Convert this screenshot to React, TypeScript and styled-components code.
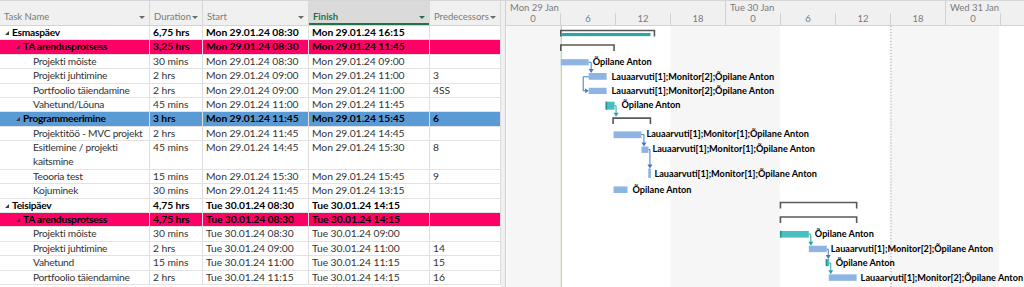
import React from "react";
import styled, { createGlobalStyle } from "styled-components";

const ROW = 14.4;
const HEAD = 25;

const GlobalStyle = createGlobalStyle`
  html, body {
    margin: 0;
    padding: 0;
    background: #ffffff;
  }
  body {
    font-family: Lato, "Liberation Sans", sans-serif;
    overflow: hidden;
  }
`;

type Task = {
  name: string;
  dur: string;
  start: string;
  finish: string;
  pred?: string;
  level: 0 | 1 | 2;
  tone?: "pink" | "blue";
  lines?: number;
};

const tasks: Task[] = [
  { name: "Esmaspäev", dur: "6,75 hrs", start: "Mon 29.01.24 08:30", finish: "Mon 29.01.24 16:15", level: 0 },
  { name: "TA arendusprotsess", dur: "3,25 hrs", start: "Mon 29.01.24 08:30", finish: "Mon 29.01.24 11:45", level: 1, tone: "pink" },
  { name: "Projekti mõiste", dur: "30 mins", start: "Mon 29.01.24 08:30", finish: "Mon 29.01.24 09:00", level: 2 },
  { name: "Projekti juhtimine", dur: "2 hrs", start: "Mon 29.01.24 09:00", finish: "Mon 29.01.24 11:00", pred: "3", level: 2 },
  { name: "Portfoolio täiendamine", dur: "2 hrs", start: "Mon 29.01.24 09:00", finish: "Mon 29.01.24 11:00", pred: "4SS", level: 2 },
  { name: "Vahetund/Lõuna", dur: "45 mins", start: "Mon 29.01.24 11:00", finish: "Mon 29.01.24 11:45", level: 2 },
  { name: "Programmeerimine", dur: "3 hrs", start: "Mon 29.01.24 11:45", finish: "Mon 29.01.24 15:45", pred: "6", level: 1, tone: "blue" },
  { name: "Projektitöö - MVC projekt", dur: "2 hrs", start: "Mon 29.01.24 11:45", finish: "Mon 29.01.24 14:45", level: 2 },
  { name: "Esitlemine / projekti kaitsmine", dur: "45 mins", start: "Mon 29.01.24 14:45", finish: "Mon 29.01.24 15:30", pred: "8", level: 2, lines: 2 },
  { name: "Teooria test", dur: "15 mins", start: "Mon 29.01.24 15:30", finish: "Mon 29.01.24 15:45", pred: "9", level: 2 },
  { name: "Kojuminek", dur: "30 mins", start: "Mon 29.01.24 11:45", finish: "Mon 29.01.24 13:15", level: 2 },
  { name: "Teisipäev", dur: "4,75 hrs", start: "Tue 30.01.24 08:30", finish: "Tue 30.01.24 14:15", level: 0 },
  { name: "TA arendusprotsess", dur: "4,75 hrs", start: "Tue 30.01.24 08:30", finish: "Tue 30.01.24 14:15", level: 1, tone: "pink" },
  { name: "Projekti mõiste", dur: "30 mins", start: "Tue 30.01.24 08:30", finish: "Tue 30.01.24 09:00", level: 2 },
  { name: "Projekti juhtimine", dur: "2 hrs", start: "Tue 30.01.24 09:00", finish: "Tue 30.01.24 11:00", pred: "14", level: 2 },
  { name: "Vahetund", dur: "15 mins", start: "Tue 30.01.24 11:00", finish: "Tue 30.01.24 11:15", pred: "15", level: 2 },
  { name: "Portfoolio täiendamine", dur: "2 hrs", start: "Tue 30.01.24 11:15", finish: "Tue 30.01.24 14:15", pred: "16", level: 2 },
];

const COLS = "150px 53px 106px 121px 71px";

const Frame = styled.div`
  display: flex;
  width: 1024px;
  height: 287px;
  overflow: hidden;
  border-top: 1px solid #d6d6d6;
  box-sizing: border-box;
`;

const Sheet = styled.div`
  width: 501px;
  flex: none;
  display: flex;
  flex-direction: column;
`;

const HeadRow = styled.div`
  display: grid;
  grid-template-columns: ${COLS};
  height: ${HEAD - 1}px;
  background: #f0f0f0;
  border-bottom: 1px solid #d4d4d4;
`;

const HeadCell = styled.div<{ $active?: boolean }>`
  display: flex;
  align-items: flex-end;
  justify-content: space-between;
  padding: 0 4px 3px 4px;
  font-size: 9.5px;
  color: ${(p) => (p.$active ? "#217346" : "#7a7a7a")};
  font-weight: ${(p) => (p.$active ? 700 : 400)};
  background: ${(p) => (p.$active ? "#dadada" : "transparent")};
  border-right: 1px solid #d9d9d9;
  box-shadow: ${(p) => (p.$active ? "inset 0 -2px 0 #217346" : "none")};
  box-sizing: border-box;
`;

const DropArrow = styled.span<{ $active?: boolean }>`
  width: 0;
  height: 0;
  margin-bottom: 3px;
  border-left: 3px solid transparent;
  border-right: 3px solid transparent;
  border-top: 3px solid ${(p) => (p.$active ? "#217346" : "#6a6a6a")};
`;

const Row = styled.div<{ $tone?: "pink" | "blue"; $lines: number }>`
  display: grid;
  grid-template-columns: ${COLS};
  height: ${(p) => p.$lines * ROW}px;
  background: ${(p) =>
    p.$tone === "pink" ? "#ff0066" : p.$tone === "blue" ? "#5b9bd5" : "#ffffff"};
`;

const Cell = styled.div<{ $bold?: boolean; $indent?: number; $name?: boolean }>`
  box-sizing: border-box;
  border-right: 1px solid #dedede;
  border-bottom: 1px solid #e3e3e3;
  padding-left: ${(p) => p.$indent ?? 3}px;
  padding-right: 2px;
  font-size: ${(p) => (p.$name ? 10.2 : 10.3)}px;
  letter-spacing: ${(p) => (p.$name ? -0.25 : -0.05)}px;
  line-height: ${ROW - 1}px;
  color: ${(p) => (p.$bold ? "#000000" : "#333333")};
  font-weight: ${(p) => (p.$bold ? 700 : 400)};
  white-space: nowrap;
  overflow: hidden;
  display: flex;
  align-items: flex-start;
`;

const NameText = styled.span<{ $wrap?: boolean }>`
  white-space: ${(p) => (p.$wrap ? "normal" : "nowrap")};
  width: ${(p) => (p.$wrap ? "108px" : "auto")};
`;

const Caret = styled.span`
  flex: none;
  width: 0;
  height: 0;
  margin: 5px 3px 0 0;
  border-left: 4px solid transparent;
  border-bottom: 4px solid #3c3c3c;
`;

const Splitter = styled.div`
  width: 4px;
  flex: none;
  background: #f0f0f0;
  border-right: 1px solid #cfcfcf;
`;

const Gantt = styled.div`
  flex: 1;
  display: flex;
  flex-direction: column;
  overflow: hidden;
`;

const Scale = styled.div`
  height: ${HEAD - 1}px;
  background: #f0f0f0;
  border-bottom: 1px solid #d4d4d4;
  display: flex;
  flex-direction: column;
  margin-left: -1px;
`;

const Tier = styled.div<{ $h: number }>`
  display: flex;
  height: ${(p) => p.$h}px;
`;

const DayCell = styled.div`
  flex: none;
  width: 220px;
  box-sizing: border-box;
  border-left: 1px solid #d2d2d2;
  padding: 1px 0 0 4px;
  font-size: 9.5px;
  color: #7a7a7a;
  line-height: 11px;
`;

const HourCell = styled.div`
  flex: none;
  width: 55px;
  box-sizing: border-box;
  border-left: 1px solid #d2d2d2;
  text-align: center;
  font-size: 9.5px;
  color: #7a7a7a;
  line-height: 11px;
`;

const Chart = styled.svg`
  display: block;
  font-family: Lato, "Liberation Sans", sans-serif;
`;

// chart coords are page coords; the svg starts at x=505, y=25
const X0 = 505;
const Y0 = 25;
const BLUE = "#8db4e2";
const TEAL = "#4bbfbf";
const LINK_BLUE = "#3f78c4";
const LINK_TEAL = "#2aa3a3";

const Bracket = ({ x1, x2, y }: { x1: number; x2: number; y: number }) => (
  <path
    d={`M${x1} ${y + 6} V${y} H${x2} V${y + 6}`}
    fill="none"
    stroke="#595959"
    strokeWidth={1.6}
  />
);

const Bar = ({ x1, x2, y1, y2, teal }: { x1: number; x2: number; y1: number; y2: number; teal?: boolean }) => (
  <g>
    <rect x={x1} y={y1} width={x2 - x1} height={y2 - y1} fill={teal ? TEAL : BLUE} />
    {teal && <rect x={x1} y={y1} width={1.5} height={y2 - y1} fill="#1f9393" />}
  </g>
);

const Label = ({ x, y, text }: { x: number; y: number; text: string }) => (
  <text x={x} y={y + 3.3} fontSize={9.2} fontWeight={700} fill="#000">
    {text}
  </text>
);

const Down = ({ x1, y1, x, y2, color }: { x1: number; y1: number; x: number; y2: number; color: string }) => (
  <g>
    <path d={`M${x1} ${y1} H${x} V${y2 - 3}`} fill="none" stroke={color} strokeWidth={1} />
    <path d={`M${x - 2.5} ${y2 - 4} L${x + 2.5} ${y2 - 4} L${x} ${y2} Z`} fill={color} />
  </g>
);

const LAB2 = "Lauaarvuti[1];Monitor[2];Õpilane Anton";
const LAB1 = "Lauaarvuti[1];Monitor[1];Õpilane Anton";
const OP = "Õpilane Anton";

const GanttChart = () => {
  const w = 1024 - X0;
  const h = 287 - Y0;
  return (
    <Chart width={w} height={h} viewBox={`${X0} ${Y0} ${w} ${h}`}>
      <rect x={X0} y={Y0} width={559 - X0} height={h} fill="#f6f6f6" />
      <rect x={669} y={Y0} width={110} height={h} fill="#f6f6f6" />
      <rect x={889} y={Y0} width={110} height={h} fill="#f6f6f6" />
      <line x1={559.5} y1={Y0} x2={559.5} y2={287} stroke="#a8d08d" strokeWidth={1} />
      <line x1={890.5} y1={Y0} x2={890.5} y2={287} stroke="#a0a0a0" strokeWidth={1} strokeDasharray="1 2" />

      {/* Esmaspäev */}
      <Bracket x1={559} x2={653} y={29.5} />
      <rect x={559} y={32} width={90} height={3.2} fill="#2ba6a6" />
      <Bracket x1={559} x2={612.5} y={44} />
      <Bar x1={559} x2={587} y1={58.3} y2={64.5} />
      <Label x={591} y={61} text={OP} />
      <Down x1={587} y1={61.4} x={589.5} y2={72.2} color={LINK_BLUE} />
      <Bar x1={587} x2={605} y1={72.2} y2={79} />
      <Label x={610} y={75.6} text={LAB2} />
      <path d="M587 76 H581.5 V90 H584" fill="none" stroke={LINK_BLUE} strokeWidth={1} />
      <path d="M583.5 87.5 L587 90 L583.5 92.5 Z" fill={LINK_BLUE} />
      <Bar x1={587} x2={605} y1={87} y2={93.3} />
      <Label x={610} y={90} text={LAB2} />
      <Bar x1={604} x2={613} y1={101} y2={109} teal />
      <Label x={620} y={104.5} text={OP} />
      <Down x1={613} y1={105} x={614.5} y2={116} color={LINK_TEAL} />

      {/* Programmeerimine */}
      <Bracket x1={611.5} x2={649} y={117.5} />
      <Bar x1={612} x2={640} y1={130.8} y2={137.6} />
      <Label x={645} y={133.5} text={LAB1} />
      <Down x1={640} y1={134} x={642.5} y2={146} color={LINK_BLUE} />
      <Bar x1={640} x2={647} y1={146} y2={152.4} />
      <Label x={651} y={148.5} text={LAB1} />
      <Down x1={647} y1={149} x={648.5} y2={168} color={LINK_BLUE} />
      <Bar x1={646.8} x2={649.5} y1={168} y2={177.6} />
      <Label x={653} y={173} text={LAB1} />
      <Bar x1={612} x2={626} y1={186} y2={192.6} />
      <Label x={631} y={189} text={OP} />

      {/* Teisipäev */}
      <Bracket x1={779.5} x2={856} y={202.2} />
      <Bracket x1={779.5} x2={856} y={216.7} />
      <Bar x1={779} x2={808} y1={230.7} y2={237.4} teal />
      <Label x={814} y={233.5} text={OP} />
      <Down x1={808} y1={234} x={810} y2={245.6} color={LINK_TEAL} />
      <Bar x1={808} x2={826} y1={245.6} y2={252} />
      <Label x={830} y={248.3} text={LAB2} />
      <Down x1={826} y1={249} x={827.5} y2={259} color={LINK_BLUE} />
      <Bar x1={825} x2={828.5} y1={259} y2={266} teal />
      <Label x={835} y={262.5} text={OP} />
      <Down x1={828.5} y1={263} x={830} y2={274.3} color={LINK_TEAL} />
      <Bar x1={828} x2={856} y1={274.3} y2={280.8} />
      <Label x={860} y={277.2} text={LAB2} />
    </Chart>
  );
};

const days = ["Mon 29 Jan", "Tue 30 Jan", "Wed 31 Jan"];
const hours = ["0", "6", "12", "18", "0", "6", "12", "18", "0", ""];

const headers = [
  { label: "Task Name" },
  { label: "Duration" },
  { label: "Start" },
  { label: "Finish", active: true },
  { label: "Predecessors" },
];

export default function App() {
  return (
    <>
      <GlobalStyle />
      <Frame>
        <Sheet>
          <HeadRow>
            {headers.map((hd) => (
              <HeadCell key={hd.label} $active={hd.active}>
                <span>{hd.label}</span>
                <DropArrow $active={hd.active} />
              </HeadCell>
            ))}
          </HeadRow>
          {tasks.map((t, i) => {
            const bold = t.level < 2;
            return (
              <Row key={i} $tone={t.tone} $lines={t.lines ?? 1}>
                <Cell $name $bold={bold} $indent={t.level === 2 ? 33 : 5 + t.level * 11}>
                  {t.level < 2 && <Caret />}
                  <NameText $wrap={!!t.lines}>{t.name}</NameText>
                </Cell>
                <Cell $bold={bold}>{t.dur}</Cell>
                <Cell $bold={bold}>{t.start}</Cell>
                <Cell $bold={bold}>{t.finish}</Cell>
                <Cell $bold={bold}>{t.pred ?? ""}</Cell>
              </Row>
            );
          })}
        </Sheet>
        <Splitter />
        <Gantt>
          <Scale>
            <Tier $h={12}>
              {days.map((d) => (
                <DayCell key={d}>{d}</DayCell>
              ))}
            </Tier>
            <Tier $h={12}>
              {hours.map((hr, i) => (
                <HourCell key={i}>{hr}</HourCell>
              ))}
            </Tier>
          </Scale>
          <GanttChart />
        </Gantt>
      </Frame>
    </>
  );
}
